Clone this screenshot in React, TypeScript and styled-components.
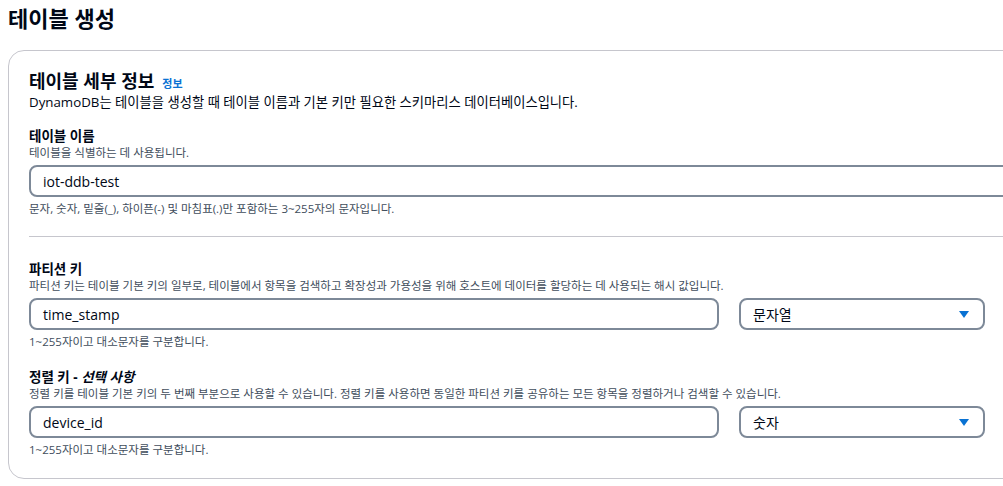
import styled, { createGlobalStyle } from 'styled-components';

const GlobalStyle = createGlobalStyle`
  html, body {
    margin: 0;
    padding: 0;
    background: #fff;
    overflow: hidden;
  }
  body {
    font-family: "Open Sans", "Noto Sans CJK KR", sans-serif;
    color: #000716;
  }
`;

const Page = styled.div`
  width: 1003px;
  height: 486px;
  padding: 4px 0 0 8px;
  box-sizing: border-box;
  overflow: hidden;
`;

const PageTitle = styled.h1`
  margin: 0;
  font-size: 22px;
  line-height: 28px;
  font-weight: 700;
`;

const Card = styled.section`
  width: 1030px;
  margin-top: 18px;
  padding: 19px 20px 20px;
  box-sizing: border-box;
  border: 1px solid #c6c6cd;
  border-radius: 16px;
`;

const CardHeader = styled.div`
  display: flex;
  align-items: baseline;
  gap: 8px;
`;

const CardTitle = styled.h2`
  margin: 0;
  font-size: 18px;
  line-height: 22px;
  font-weight: 700;
`;

const InfoLink = styled.span`
  font-size: 11px;
  font-weight: 700;
  color: #0972d3;
`;

const CardDesc = styled.p`
  margin: 0;
  font-size: 13.3px;
  line-height: 20px;
  color: #000716;
`;

const Field = styled.div<{ $top: number }>`
  margin-top: ${p => p.$top}px;
`;

const Label = styled.div`
  font-size: 13.5px;
  line-height: 18px;
  font-weight: 700;

  em {
    font-style: italic;
  }
`;

const Hint = styled.div`
  font-size: 11.5px;
  line-height: 16px;
  color: #414d5c;
`;

const Constraint = styled(Hint)`
  margin-top: 4px;
`;

const Row = styled.div<{ $split?: boolean }>`
  display: grid;
  grid-template-columns: ${p => (p.$split ? '690px 246px' : '1fr')};
  gap: 20px;
  margin-top: 4px;
`;

const Box = styled.div`
  height: 32px;
  box-sizing: border-box;
  border: 2px solid #7d8998;
  border-radius: 8px;
  padding: 0 12px;
  display: flex;
  align-items: center;
  justify-content: space-between;
  font-size: 14px;
  color: #000716;
`;

const Caret = styled.span`
  width: 0;
  height: 0;
  border-left: 5px solid transparent;
  border-right: 5px solid transparent;
  border-top: 7px solid #0972d3;
  margin-right: 2px;
`;

const Divider = styled.hr`
  margin: 19px 0 23px;
  border: none;
  border-top: 1px solid #c6c6cd;
`;

const Select = ({ value }: { value: string }) => (
  <Box>
    <span>{value}</span>
    <Caret />
  </Box>
);

export default function App() {
  return (
    <Page>
      <GlobalStyle />
      <PageTitle>테이블 생성</PageTitle>
      <Card>
        <CardHeader>
          <CardTitle>테이블 세부 정보</CardTitle>
          <InfoLink>정보</InfoLink>
        </CardHeader>
        <CardDesc>DynamoDB는 테이블을 생성할 때 테이블 이름과 기본 키만 필요한 스키마리스 데이터베이스입니다.</CardDesc>

        <Field $top={15}>
          <Label>테이블 이름</Label>
          <Hint>테이블을 식별하는 데 사용됩니다.</Hint>
          <Row>
            <Box>iot-ddb-test</Box>
          </Row>
          <Constraint>문자, 숫자, 밑줄(_), 하이픈(-) 및 마침표(.)만 포함하는 3~255자의 문자입니다.</Constraint>
        </Field>

        <Divider />

        <Field $top={0}>
          <Label>파티션 키</Label>
          <Hint>파티션 키는 테이블 기본 키의 일부로, 테이블에서 항목을 검색하고 확장성과 가용성을 위해 호스트에 데이터를 할당하는 데 사용되는 해시 값입니다.</Hint>
          <Row $split>
            <Box>time_stamp</Box>
            <Select value="문자열" />
          </Row>
          <Constraint>1~255자이고 대소문자를 구분합니다.</Constraint>
        </Field>

        <Field $top={18}>
          <Label>
            정렬 키 - <em>선택 사항</em>
          </Label>
          <Hint>정렬 키를 테이블 기본 키의 두 번째 부분으로 사용할 수 있습니다. 정렬 키를 사용하면 동일한 파티션 키를 공유하는 모든 항목을 정렬하거나 검색할 수 있습니다.</Hint>
          <Row $split>
            <Box>device_id</Box>
            <Select value="숫자" />
          </Row>
          <Constraint>1~255자이고 대소문자를 구분합니다.</Constraint>
        </Field>
      </Card>
    </Page>
  );
}
